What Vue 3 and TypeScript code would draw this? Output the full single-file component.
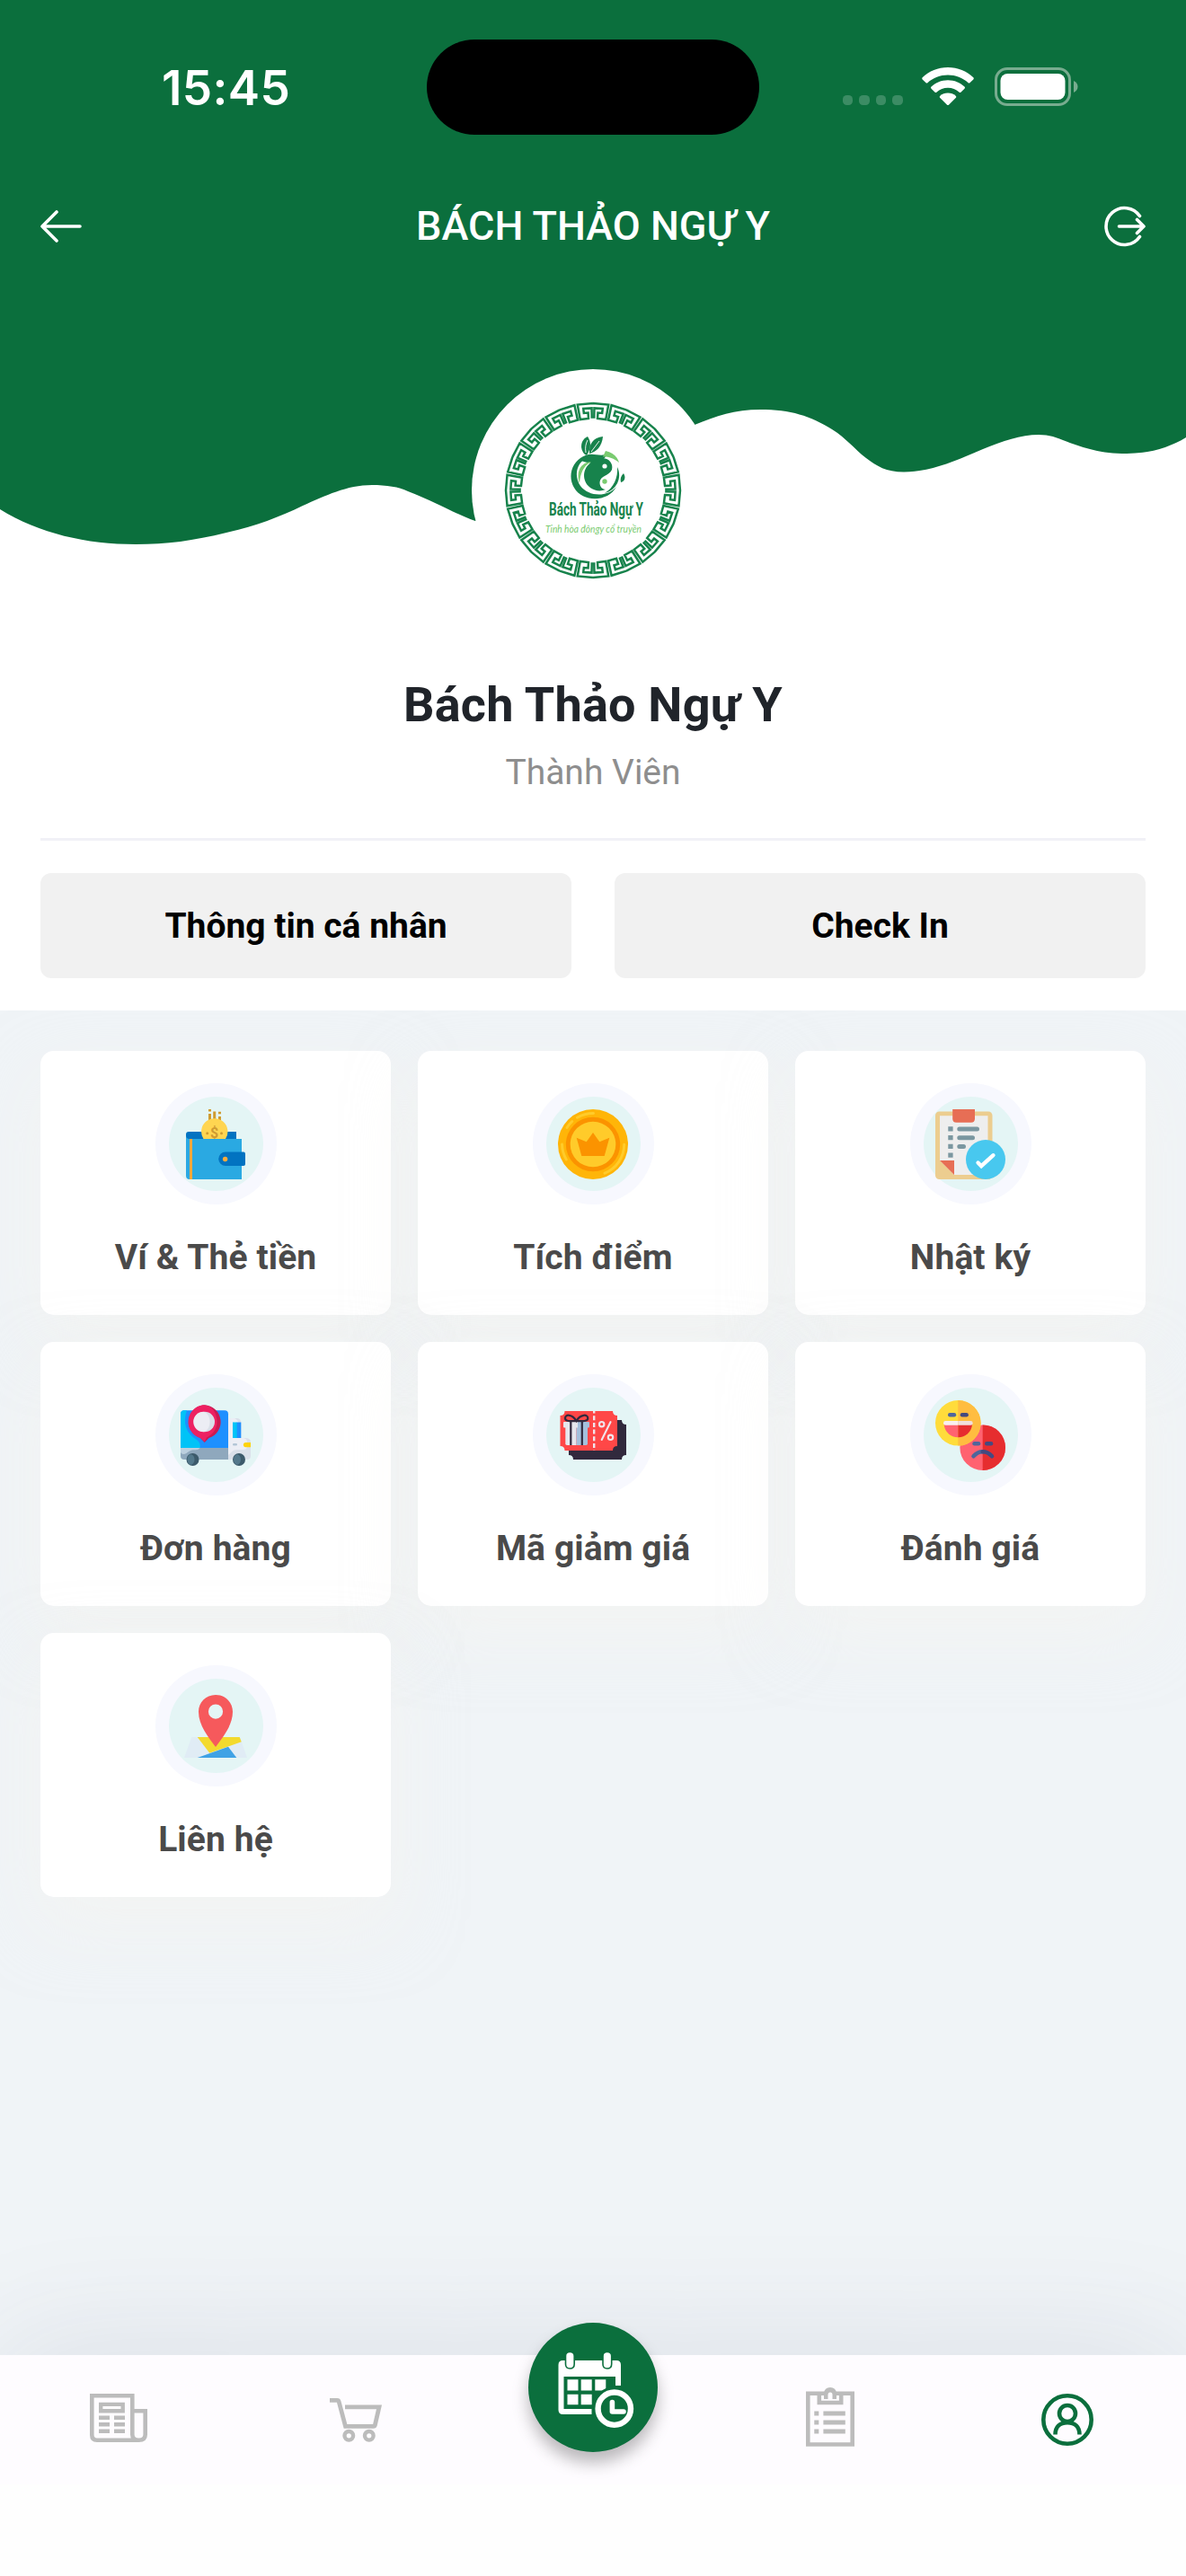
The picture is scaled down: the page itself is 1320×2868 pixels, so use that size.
<script setup lang="ts">
interface MenuItem {
  id: string
  label: string
}

const menu: MenuItem[] = [
  { id: 'wallet', label: 'Ví & Thẻ tiền' },
  { id: 'points', label: 'Tích điểm' },
  { id: 'diary', label: 'Nhật ký' },
  { id: 'orders', label: 'Đơn hàng' },
  { id: 'voucher', label: 'Mã giảm giá' },
  { id: 'review', label: 'Đánh giá' },
  { id: 'contact', label: 'Liên hệ' },
]

// Greek-key border: one key is described on a flat strip (u along, v inward)
// and bent around the ring; neighbouring keys are mirrored in pairs.
const KEY: [number, number][] = [
  [0, 0], [0.91, 0], [0.91, 1], [0.32, 1], [0.32, 0.62], [0.6, 0.62], [0.6, 0.32], [0.08, 0.32], [0.08, 1],
]
const OUTER = 97
const INNER = 80.2
const STEP = Math.PI / 16

function bend(centre: number, side: number): string {
  return KEY.map(([u, v], i) => {
    const a = centre + side * u * STEP
    const r = OUTER - v * (OUTER - INNER)
    const x = 135 + r * Math.sin(a)
    const y = 135 - r * Math.cos(a)
    return `${i ? 'L' : 'M'}${x.toFixed(2)} ${y.toFixed(2)}`
  }).join('')
}

const meander: string = Array.from({ length: 16 }, (_, i) => {
  const c = i * 2 * STEP
  return bend(c, 1) + bend(c, -1)
}).join('')
</script>

<template>
  <div class="page">
    <section class="hero">
      <svg class="wave" viewBox="0 0 1320 620" width="1320" height="620">
        <path
          fill="#0b6f3d"
          d="M0 0H1320V487C1302 498 1280 505 1254 505C1225 505 1207 499 1187 491.500C1176 487 1168 484 1156 484C1136 484 1116 491 1094 500C1066 512 1036 525.500 1006 525.500C986 525.500 976 519 964 510C951 500 942 488 926 478C902 463 880 456 846 456C818 456 797 463 773 473L529 580C504 571 488 560 454 547C444 542 430 540 414 540C386 540 362 552 337 563C310 576 284 586 252 593C215 602 186 606 151 606C96 606 44 594 0 567Z"
        />
      </svg>

      <div class="status">
        <span class="time">15:45</span>
        <span class="island"></span>
        <div class="signals">
          <span class="dots"><i></i><i></i><i></i><i></i></span>
          <svg class="wifi" viewBox="0 0 58 42" width="58" height="42" fill="#fff">
            <path d="M29 0C40 0 50 4.300 57.300 11.200Q58.300 12.300 57.300 13.400L53.600 17.100Q52.500 18.100 51.400 17.100C45.500 11.700 37.500 8.600 29 8.600S12.500 11.700 6.600 17.100Q5.500 18.100 4.400 17.100L.7 13.400Q-.3 12.300.7 11.200C8 4.300 18 0 29 0Z" />
            <path d="M29 14.200C36.200 14.200 42.700 17 47.500 21.500Q48.600 22.600 47.500 23.700L43.600 27.500Q42.500 28.500 41.400 27.500C38.100 24.500 33.800 22.800 29 22.800S19.900 24.500 16.600 27.500Q15.500 28.500 14.400 27.500L10.500 23.700Q9.400 22.600 10.500 21.500C15.300 17 21.800 14.200 29 14.200Z" />
            <path d="M29 28.600C32.400 28.600 35.400 29.800 37.700 31.800Q38.800 32.900 37.700 34L30.200 41.400Q29 42.500 27.800 41.400L20.300 34Q19.200 32.900 20.300 31.800C22.600 29.800 25.600 28.600 29 28.600Z" />
          </svg>
          <svg class="battery" viewBox="0 0 93 43" width="93" height="43">
            <rect x="1.500" y="1.500" width="82" height="40" rx="12.500" fill="none" stroke="#78ac8f" stroke-width="3" />
            <rect x="6.500" y="7" width="72" height="29" rx="8" fill="#fff" />
            <path d="M88 15C91 16.500 92.500 18.500 92.500 21.500S91 26.500 88 28Z" fill="#78ac8f" />
          </svg>
        </div>
      </div>

      <header class="bar">
        <svg viewBox="0 0 46 36" width="46" height="36" fill="none" stroke="#fff" stroke-width="3.600" stroke-linecap="round" stroke-linejoin="round">
          <path d="M44 18H2.500M18 2L2 18L18 34" />
        </svg>
        <h1>BÁCH THẢO NGỰ Y</h1>
        <svg viewBox="0 0 46 46" width="46" height="46" fill="none" stroke="#fff" stroke-width="3.600" stroke-linecap="round" stroke-linejoin="round">
          <path d="M39.500 11.500A20.500 20.500 0 1 0 39.500 34.500M16.500 23H43M36.500 15.500L44 23L36.500 30.500" />
        </svg>
      </header>

      <div class="avatar">
        <svg viewBox="0 0 270 270" width="270" height="270">
          <path :d="meander" fill="none" stroke="#17834c" stroke-width="2.500" stroke-linejoin="miter" />
          <!-- leaves -->
          <path d="M126 95C119 88 122 78 129 75C134 82 132 89 128 96Z" fill="#17834c" />
          <path d="M131 94C130 84 135 76 146 75C145 86 139 92 131 94Z" fill="#17834c" />
          <path d="M126 96.500C134 92 143 98 150 94.500C147 105 136 107 122 102Z" fill="#17834c" />
          <path d="M127 93C126 87 127 83 129 79M133 92L142 80" fill="none" stroke="#fff" stroke-width="0.900" />
          <!-- swirl -->
          <path d="M127 96C112 101 106 119 114 132C124 149 152 148 161 131C151 143 130 142 121 130C113 118 117 103 130 98Z" fill="#17834c" />
          <path d="M133 103C121 104 116 114 120 127C121 116 124 108 133 103Z" fill="#7acb70" />
          <path d="M149 91C157 93 162 97 164 104C158 99 153 97.500 146 97.500Z" fill="#7acb70" />
          <path d="M144 99.500C152 98 158 105 156 112C153 119 143 118 142.500 126C142.500 131 145 133.500 149 134C140 138 129 133 126 124C122 111 132 101 144 99.500Z" fill="#17834c" />
          <circle cx="148" cy="108" r="2.600" fill="#fff" />
          <circle cx="148" cy="125" r="2.700" fill="#7acb70" />
          <path d="M162 109C168 121 161 135 148 138C158 132 163 121 162 109Z" fill="#17834c" />
          <path d="M169 116C172 121 170 125 166 126C165 122 166 119 169 116Z" fill="#17834c" />
          <text x="86" y="163" class="brand" textLength="105" lengthAdjust="spacingAndGlyphs">Bách Thảo Ngự Y</text>
          <text x="82" y="182" class="motto" textLength="107" lengthAdjust="spacingAndGlyphs">Tinh hòa đôngy cổ truyền</text>
        </svg>
      </div>

      <h2>Bách Thảo Ngự Y</h2>
      <p class="rank">Thành Viên</p>
      <hr />
      <div class="actions">
        <button>Thông tin cá nhân</button>
        <button>Check In</button>
      </div>
    </section>

    <main class="grid">
      <article v-for="item in menu" :key="item.id" class="card">
        <div class="halo">
          <div class="disc">
            <svg viewBox="0 0 78 78" width="78" height="78">
              <g v-if="item.id === 'wallet'">
                <path d="M31 0h3v2.500h-3zM31 5h3v9h-3zM36.200 2.500h3v9h-3zM42 2.700h3v2.500h-3zM42 8h3v6h-3z" fill="#cf9b31" />
                <path d="M9 25H62V34H6V28A3 3 0 0 1 9 25Z" fill="#0273c1" />
                <path d="M25.500 33A14.700 14.700 0 1 1 50 33Z" fill="#ffd551" />
                <text x="37.700" y="32.300" class="dollar">$</text>
                <circle cx="29.700" cy="26.700" r="1.500" fill="#cf9b31" />
                <circle cx="45.500" cy="26.700" r="1.500" fill="#cf9b31" />
                <path d="M6 29Q6 33 10 33H68V78H10Q6 78 6 74Z" fill="#2aa9e2" />
                <path d="M10 33h3v45h-3z" fill="#f5a83b" />
                <path d="M50 47.500H70Q72 47.500 72 49.500V61Q72 63 70 63H50A7.750 7.750 0 0 1 50 47.500Z" fill="#0273c1" />
                <circle cx="49.600" cy="55.500" r="2.700" fill="#ffab3c" />
              </g>
              <g v-else-if="item.id === 'points'">
                <circle cx="39" cy="39" r="39" fill="#ffb508" />
                <circle cx="39" cy="39" r="30.200" fill="#fb9300" />
                <circle cx="39" cy="39" r="25.300" fill="#ffcb2a" />
                <path d="M20.700 31.700L31.700 36.300L39 26L46.300 36.300L57.300 31.700L51.700 52H26.300Z" fill="#fb9300" />
                <path d="M21.500 9.300A34.600 34.600 0 0 1 39.500 4.500M10 20.500A34.600 34.600 0 0 1 15.700 13.500M4.500 39A34.600 34.600 0 0 0 9.300 56M73.700 39.300A34.600 34.600 0 0 1 52 71.200" fill="none" stroke="#ffcb2a" stroke-width="3" stroke-linecap="round" />
              </g>
              <g v-else-if="item.id === 'diary'">
                <rect x="0" y="2.400" width="63.500" height="75.600" rx="4.500" fill="#eccd8f" />
                <path d="M5 7.300H58.500V73H21L5 57Z" fill="#eee" />
                <path d="M5 57H21V73Z" fill="#e76e55" />
                <path d="M19.200 0H44V10.500Q44 14.700 39.800 14.700H23.400Q19.200 14.700 19.200 10.500Z" fill="#e76e55" />
                <path d="M14.300 19.300h5.300v5.300h-5.300zM14.300 29h5.300v5.300h-5.300zM14.300 38.800h5.300v5.300h-5.300zM14.300 48.500h5.300v5.300h-5.300z" fill="#7b97a0" />
                <path d="M26.800 22H46.500M26.800 31.700H41.500M26.800 41.500H31.500" stroke="#7b97a0" stroke-width="5" stroke-linecap="round" />
                <circle cx="56" cy="56" r="22" fill="#48c8ef" />
                <path d="M47.500 59.500L51.200 63.200L64.500 51.200" fill="none" stroke="#fff" stroke-width="4.300" stroke-linecap="round" stroke-linejoin="miter" />
              </g>
              <g v-else-if="item.id === 'orders'">
                <path d="M4 11.300H49Q53 11.300 53 15.300V53H0V15.300Q0 11.300 4 11.300Z" fill="#1e90ff" />
                <path d="M4 11.300H7C2 25 6 37 18 44Q23 48 21.500 53H0V15.300Q0 11.300 4 11.300Z" fill="#00c3f7" />
                <path d="M0 53H53V66H4Q0 66 0 62Z" fill="#8fa8bd" />
                <path d="M0 53H21.500Q20 55.500 16 55.200C11 55 9 57 6.500 59Q2 61.500 0 58Z" fill="#bccfde" />
                <path d="M53 20H62Q67.300 20 67.300 25V42H73Q78 42 78 47V62Q78 66 74 66H53Z" fill="#eceef5" />
                <path d="M63 20Q67.300 20.500 67.300 25V42H64V25Q64 22 60 20ZM72 42Q78 42 78 47V62Q78 66 74 66H53V61C57 58 58 55 63 55H70Q74 55 74 51V46Q74 43 70 42Z" fill="#dae0ea" />
                <path d="M58 24.500h5v17.500h-5z" fill="#00c3f7" />
                <path d="M62.700 24.500h4.600v17.500h-4.600z" fill="#1e90ff" />
                <rect x="58" y="48" width="5" height="2.400" rx="1.200" fill="#b3c6d6" />
                <path d="M78 47H72.500A2.600 2.600 0 0 0 72.500 52.200H78Z" fill="#fdd30b" />
                <circle cx="13.500" cy="66" r="7" fill="#3c5a6b" />
                <ellipse cx="11.500" cy="66" rx="4" ry="5.800" fill="#53788b" />
                <circle cx="65" cy="66" r="7" fill="#3c5a6b" />
                <ellipse cx="63" cy="66" rx="4" ry="5.800" fill="#53788b" />
                <path d="M26.700 5.300A18.800 18.800 0 0 1 31.500 42L26.700 47L22 42A18.800 18.800 0 0 1 26.700 5.300Z" fill="#ca1b52" />
                <path d="M25 5.300C35 5.300 40.500 14 40.500 24C40.500 33 35 38.500 29 41.500L26.700 46L22 42A18.800 18.800 0 0 1 25 5.300Z" fill="#ed2162" />
                <circle cx="26.700" cy="24" r="11.300" fill="#dadfe9" />
                <path d="M25.500 12.700C30 14 32.500 18.500 32.500 24S30 34 25.500 35.300A11.300 11.300 0 0 1 25.500 12.700Z" fill="#ecedf4" />
              </g>
              <g v-else-if="item.id === 'voucher'">
                <path d="M17 22H71Q71 27 76 27V61Q71 61 71 66H17Q17 61 12 61V27Q17 27 17 22Z" fill="#31293d" />
                <path d="M7.500 12H61Q61 17 66 17V51Q61 51 61 56H7.500Q7.500 51 2.500 51V17Q7.500 17 7.500 12Z" fill="#ff4747" />
                <path d="M40.200 12V56" stroke="#f1e4ea" stroke-width="2.400" stroke-dasharray="5 2.700" stroke-dashoffset="2.500" />
                <path d="M8.300 30H20.500V50H10Q8.300 50 8.300 48.300Z" fill="#e6e7ed" />
                <path d="M20.500 30H33V48.300Q33 50 31.300 50H20.500Z" fill="#a4c0dc" />
                <path d="M7 24H22V30.500H7Q6 30.500 6 29.500V25Q6 24 7 24Z" fill="#e6e7ed" />
                <path d="M22 24H34Q35 24 35 25V29.500Q35 30.500 34 30.500H22Z" fill="#a4c0dc" />
                <path d="M14.300 24V50M26.800 24V50" stroke="#31293d" stroke-width="2.200" />
                <path d="M20.500 23C17 23 8 24.500 8 20C8 15 16 15.500 20.500 23C25 15.500 33.300 15 33.300 20C33.300 24.500 24 23 20.500 23Z" fill="none" stroke="#31293d" stroke-width="2.200" />
                <g fill="none" stroke="#f1e4ea" stroke-width="2.100" stroke-linecap="round">
                  <circle cx="48.700" cy="26.700" r="2.700" />
                  <circle cx="58.500" cy="41.300" r="2.700" />
                  <path d="M58.500 24.200L48.700 44" />
                </g>
              </g>
              <g v-else-if="item.id === 'review'">
                <circle cx="52.700" cy="52.700" r="25.300" fill="#ff6270" />
                <path d="M52.700 27.400A25.300 25.300 0 0 1 52.700 78Z" fill="#e62d2f" />
                <rect x="41.300" y="46" width="9" height="4.500" rx="2.200" fill="#4f669b" />
                <rect x="55" y="46" width="9.300" height="4.500" rx="2.200" fill="#454a80" />
                <path d="M42.500 62.200Q47 57.200 52.700 57.200" fill="none" stroke="#4f669b" stroke-width="4.600" stroke-linecap="round" />
                <path d="M52.700 57.200Q58.500 57.200 63 62.200" fill="none" stroke="#454a80" stroke-width="4.600" stroke-linecap="round" />
                <circle cx="25.300" cy="25.300" r="25.300" fill="#ffdc3b" />
                <path d="M25.300 0A25.300 25.300 0 0 1 25.300 50.600Z" fill="#ffbd40" />
                <rect x="14" y="14" width="9.200" height="4.500" rx="2.200" fill="#4f669b" />
                <rect x="27.700" y="14" width="9.200" height="4.500" rx="2.200" fill="#454a80" />
                <path d="M9.700 27H25.300V41.200A15.500 15.500 0 0 1 9.700 27Z" fill="#ff6270" />
                <path d="M25.300 27H41A15.500 15.500 0 0 1 25.300 41.200Z" fill="#e62d2f" />
                <path d="M25.300 23V27.800H11.300Q9 27.800 9 25.400T11.300 23Z" fill="#f9efef" />
                <path d="M25.300 23V27.800H39.300Q41.700 27.800 41.700 25.400T39.300 23Z" fill="#f1dfdb" />
              </g>
              <g v-else>
                <path d="M12.300 51H66L74 74H4Z" fill="#e0ecf5" />
                <path d="M18.700 51H65.700L67.700 56.300L32.300 68.700Z" fill="#f3da2e" />
                <path d="M18.700 74L53 61.700L62.300 74Z" fill="#3fa2e5" />
                <path fill-rule="evenodd" d="M39 4C50 4 58 12.500 58 22.700C58 38 47 51 39 62C31 51 20 38 20 22.700C20 12.500 28 4 39 4ZM39 14.500A8.100 8.100 0 1 0 39 30.700A8.100 8.100 0 1 0 39 14.500Z" fill="#f6595c" />
              </g>
            </svg>
          </div>
        </div>
        <span class="label">{{ item.label }}</span>
      </article>
    </main>

    <footer>
      <nav>
        <a>
          <svg class="news" viewBox="0 0 64 54" width="64" height="54" fill="none" stroke="#bcbcbc" stroke-width="4.600">
            <path d="M2.300 2.300H47.300V45.500Q47.300 51.700 54.500 51.700Q61.700 51.700 61.700 45.500V19.300H49.500M2.300 0V46Q2.300 51.700 8 51.700H55" />
            <path d="M12.200 11.900H36.700V19.200H12.200Z" stroke-width="4.400" />
            <path d="M10 26.800H22M27 26.800H39M10 34.300H22M27 34.300H39M10 41.700H22M27 41.700H39" stroke-width="4.600" />
          </svg>
        </a>
        <a>
          <svg class="cart" viewBox="0 0 58 50" width="58" height="50" fill="none" stroke="#bcbcbc" stroke-width="4.800">
            <path d="M0 2.400H8.300Q9.800 2.400 10.200 4L17.500 31.300H48.500Q50 31.300 50.400 29.800L55 9.800H17" />
            <circle cx="21.300" cy="41.800" r="4.800" stroke-width="4.400" />
            <circle cx="43.800" cy="41.800" r="4.800" stroke-width="4.400" />
          </svg>
        </a>
        <a class="booking">
          <span class="fab">
            <svg viewBox="0 0 144 144" width="144" height="144">
              <path d="M38.500 42H98Q103 42 103 47V70H97V60H39.500V96H70.500V102H38.500Q33.500 102 33.500 97V47Q33.500 42 38.500 42Z" fill="#fff" />
              <path d="M43.500 63.300h12v12.200h-12zM58.700 63.300h12v12.200h-12zM74.300 63.300h12v12.200h-12zM43.500 79.800h12v11.500h-12zM58.700 79.800h12v11.500h-12z" fill="#fff" />
              <g fill="#fff" stroke="#0b6f3d" stroke-width="1.600">
                <path d="M41.500 37Q41.500 32.500 46.300 32.500T51.200 37V46Q51.200 51 46.300 51T41.500 46Z" />
                <path d="M83 37Q83 32.500 87.800 32.500T92.700 37V46Q92.700 51 87.800 51T83 46Z" />
              </g>
              <circle cx="95.800" cy="95.700" r="24.500" fill="#0b6f3d" />
              <circle cx="95.800" cy="95.700" r="18.200" fill="none" stroke="#fff" stroke-width="6.400" />
              <path d="M93.400 88.500V99H106" fill="none" stroke="#fff" stroke-width="5.600" stroke-linecap="round" stroke-linejoin="round" />
            </svg>
          </span>
        </a>
        <a>
          <svg class="list" viewBox="0 0 54 66" width="54" height="66" fill="none" stroke="#bcbcbc" stroke-width="4.600">
            <path d="M2.300 6.800H51.700V63.500H2.300Z" />
            <path d="M14.800 6V17H39.200V6" />
            <path d="M20 6.800Q20.500 0 27 0T34 6.800V13H20Z" fill="#bcbcbc" stroke="none" />
            <path d="M24.500 14V8.500Q24.500 5.500 27 5.500T29.500 8.500V14Z" fill="#fefcff" stroke="none" />
            <path d="M9.300 29H14.300M19.400 29H43.800M9.300 39H14.300M19.400 39H43.800M9.300 49H14.300M19.400 49H43.800" stroke-width="5" />
          </svg>
        </a>
        <a>
          <svg viewBox="0 0 58 58" width="58" height="58" fill="none" stroke="#0b6f3d" stroke-width="4.600">
            <circle cx="29" cy="29" r="26.700" />
            <circle cx="29" cy="22" r="9" />
            <path d="M15.500 45.500C15.500 37 20.500 32.200 29 32.200S42.500 37 42.500 45.500" />
          </svg>
        </a>
      </nav>
    </footer>
  </div>
</template>

<style>
body {
  background: #f0f4f7;
}
</style>

<style scoped>
.page {
  width: 1320px;
  height: 2868px;
  display: flex;
  flex-direction: column;
  overflow: hidden;
  background: #f0f4f7;
  font-family: Roboto, 'Liberation Sans', sans-serif;
}
svg {
  display: block;
}
.hero {
  position: relative;
  height: 1125px;
  flex: none;
  background: #fff;
  box-sizing: border-box;
  padding: 0 45px;
  display: flex;
  flex-direction: column;
  align-items: center;
}
.wave {
  position: absolute;
  left: 0;
  top: 0;
}
.status {
  position: relative;
  width: 1320px;
  height: 194px;
  display: grid;
  grid-template-columns: 475px 370px 475px;
  align-items: center;
}
.time {
  font: 600 53px/60px Inter, 'Liberation Sans', sans-serif;
  color: #fff;
  padding-left: 180px;
  padding-top: 1px;
  letter-spacing: 0.4px;
}
.island {
  height: 106px;
  border-radius: 53px;
  background: #000;
}
.signals {
  display: flex;
  align-items: flex-end;
  height: 43px;
  padding-left: 93px;
  margin-bottom: 1px;
}
.dots {
  display: flex;
  gap: 7px;
  margin-right: 21px;
  margin-bottom: 1px;
}
.dots i {
  width: 11.400px;
  height: 11.400px;
  border-radius: 4.500px;
  background: #3c8c64;
}
.wifi {
  margin-right: 23px;
  margin-bottom: 1px;
}
.bar {
  position: relative;
  width: 1230px;
  height: 116px;
  display: flex;
  align-items: center;
  justify-content: space-between;
}
h1 {
  margin: 0;
  font-size: 45px;
  font-weight: 500;
  line-height: 60px;
  color: #fff;
}
.avatar {
  position: relative;
  margin-top: 101px;
  width: 270px;
  height: 270px;
  flex: none;
  border-radius: 50%;
  background: #fff;
}
.brand {
  font: 700 20px Roboto, sans-serif;
  fill: #17834c;
}
.motto {
  font: italic 400 11px Lato, sans-serif;
  fill: #7acb70;
}
.dollar {
  font: 700 16px Roboto, sans-serif;
  fill: #cf9b31;
  text-anchor: middle;
}
h2 {
  margin: 69px 0 0;
  font-size: 54px;
  font-weight: 700;
  line-height: 70px;
  letter-spacing: 0.2px;
  color: #20242a;
}
.rank {
  margin: 15px 0 0;
  font-size: 39px;
  line-height: 50px;
  color: #8e8e8e;
}
hr {
  width: 1230px;
  height: 3px;
  margin: 48px 0 0;
  border: 0;
  background: #f1f1f7;
}
.actions {
  width: 1230px;
  margin-top: 36px;
  display: grid;
  grid-template-columns: 1fr 1fr;
  gap: 48px;
}
button {
  height: 117px;
  padding: 0;
  border: 0;
  border-radius: 12px;
  background: #f1f1f1;
  color: #000;
  font: 700 39px/50px Roboto, sans-serif;
}
.grid {
  flex: 1;
  padding: 45px 45px 0;
  display: grid;
  grid-template-columns: repeat(3, 390px);
  grid-auto-rows: 294px;
  align-content: start;
  gap: 30px;
}
.card {
  border-radius: 15px;
  background: #fff;
  box-shadow: 0 30px 75px rgba(247, 245, 240, 0.5);
  display: flex;
  flex-direction: column;
  align-items: center;
  padding-top: 36px;
  box-sizing: border-box;
}
.halo {
  width: 135px;
  height: 135px;
  border-radius: 50%;
  background: #f7f8fe;
  display: grid;
  place-items: center;
}
.disc {
  width: 105px;
  height: 105px;
  border-radius: 50%;
  background: #e4f5f5;
  display: grid;
  place-items: center;
}
.label {
  margin-top: 34px;
  font-size: 39px;
  line-height: 50px;
  font-weight: 700;
  letter-spacing: 0.1px;
  color: #4a4a4a;
}
footer {
  position: relative;
  height: 246px;
  flex: none;
  background: #fefefe;
  box-shadow: 0 -12px 140px rgba(60, 60, 100, 0.1);
}
nav {
  height: 144px;
  background: #fefcff;
  display: grid;
  grid-template-columns: repeat(5, 264px);
  align-items: center;
  justify-items: center;
}
.news {
  margin-bottom: 4px;
}
.cart {
  margin-top: 2px;
}
.list {
  margin-bottom: 6px;
}
.booking {
  align-self: start;
}
.fab {
  display: block;
  width: 144px;
  height: 144px;
  margin-top: -36px;
  border-radius: 50%;
  background: #0b6f3d;
  box-shadow: 0 12px 18px rgba(0, 0, 0, 0.27);
}
</style>
